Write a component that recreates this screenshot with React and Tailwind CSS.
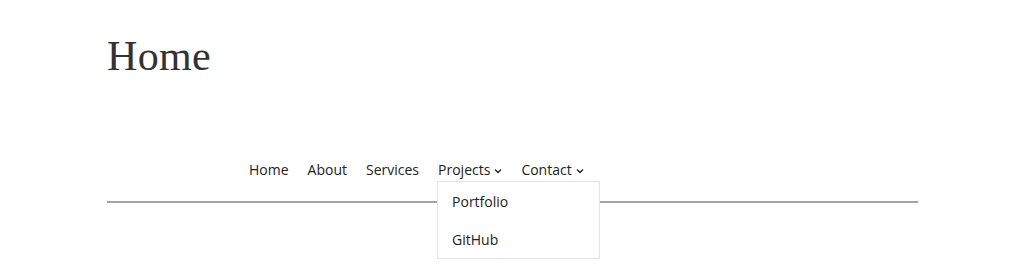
import React from 'react';

const Chevron = () => (
  <svg width="8" height="6" viewBox="0 0 8 6" className="ml-[4px] mt-[2px]">
    <path d="M1 1.5 L4 4.5 L7 1.5" fill="none" stroke="#222" strokeWidth="1.4" />
  </svg>
);

export default function App() {
  return (
    <div className="w-[1024px] h-[264px] bg-white overflow-hidden">
      <div className="pl-[107px] pr-[106px]">
        {/* Título */}
        <h1 className="pt-[28px] text-[42px] leading-[56px] text-[#333] font-['Liberation_Serif',serif] tracking-[0.3px]">
          Home
        </h1>

        {/* Navegación */}
        <nav className="mt-[76px] pl-[142px] flex gap-[19px] text-[14px] leading-[20px] text-[#222] font-['Open_Sans',sans-serif]">
          <a>Home</a>
          <a>About</a>
          <a>Services</a>
          <div className="relative flex items-center">
            <span>Projects</span>
            <Chevron />
            <div className="absolute left-[-1px] top-[21px] w-[163px] h-[78px] bg-white border border-[#e3e3e3] z-10 flex flex-col pl-[14px] pt-[10px] gap-[18px]">
              <span>Portfolio</span>
              <span>GitHub</span>
            </div>
          </div>
          <div className="flex items-center">
            <span>Contact</span>
            <Chevron />
          </div>
        </nav>

        <div className="mt-[21px] h-[2px] bg-[#a3a3a3]" />
      </div>
    </div>
  );
}
